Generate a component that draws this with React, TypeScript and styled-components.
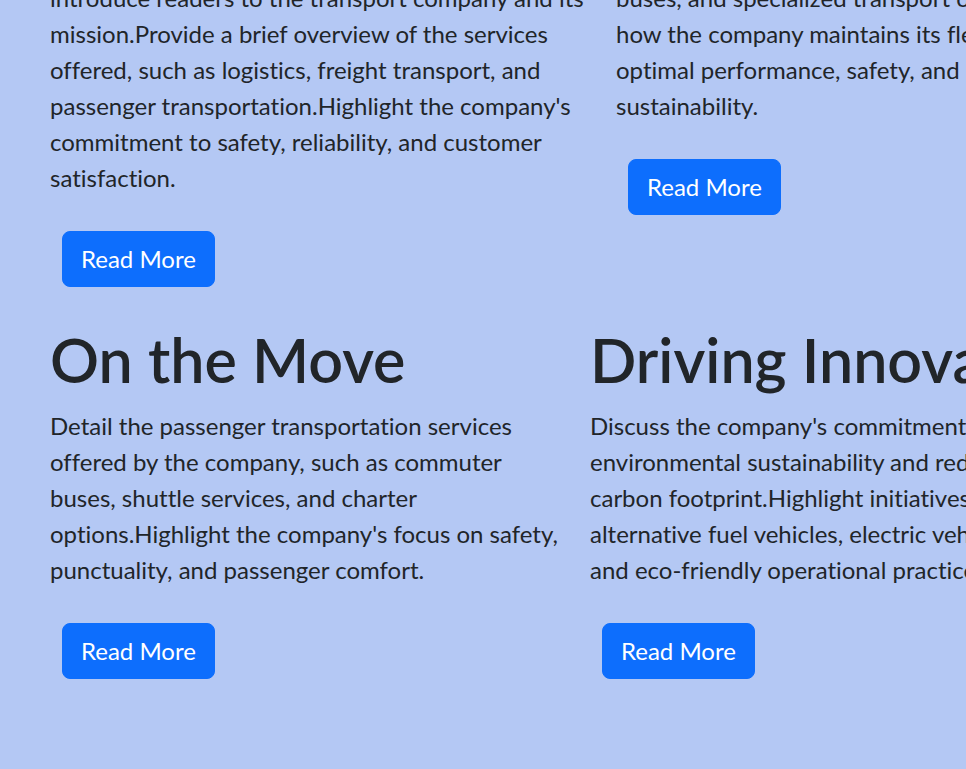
import React from "react";
import styled, { createGlobalStyle } from "styled-components";

const Global = createGlobalStyle`
  html, body {
    margin: 0;
    padding: 0;
    background: #b4c8f4;
    overflow: hidden;
  }
  body {
    font-family: Lato, "Noto Sans", sans-serif;
    font-variant-ligatures: none;
    color: #212529;
  }
`;

const Page = styled.main`
  margin-top: -20px;
  padding-left: 50px;
  width: 1300px;
  display: flex;
  flex-direction: column;
  gap: 37px;
`;

const Row = styled.section<{ $left: number }>`
  display: grid;
  grid-template-columns: ${(p) => p.$left}px 1fr;
`;

const Card = styled.article`
  display: flex;
  flex-direction: column;
  align-items: flex-start;
  min-width: 0;
`;

const Title = styled.h1`
  margin: 0 0 12px;
  font-size: 61px;
  font-weight: 600;
  line-height: 72px;
  white-space: nowrap;
`;

const Text = styled.p`
  margin: 0 0 35px;
  font-size: 24px;
  line-height: 36px;
  white-space: nowrap;
`;

const Button = styled.button`
  margin-left: 12px;
  padding: 9px 18px;
  border: 1px solid #0d6efd;
  border-radius: 8px;
  background: #0d6efd;
  color: #ffffff;
  font-family: inherit;
  font-variant-ligatures: none;
  font-size: 24px;
  line-height: 36px;
  cursor: pointer;
`;

type Item = { title?: string; lines: string[] };

const Lines = ({ lines }: { lines: string[] }) => (
  <Text>
    {lines.map((l, i) => (
      <React.Fragment key={i}>
        {l}
        {i < lines.length - 1 && <br />}
      </React.Fragment>
    ))}
  </Text>
);

const CardView = ({ item }: { item: Item }) => (
  <Card>
    {item.title && <Title>{item.title}</Title>}
    <Lines lines={item.lines} />
    <Button type="button">Read More</Button>
  </Card>
);

const top: Item[] = [
  {
    lines: [
      "introduce readers to the transport company and its",
      "mission.Provide a brief overview of the services",
      "offered, such as logistics, freight transport, and",
      "passenger transportation.Highlight the company's",
      "commitment to safety, reliability, and customer",
      "satisfaction.",
    ],
  },
  {
    lines: [
      "buses, and specialized transport options.Explain",
      "how the company maintains its fleet to ensure",
      "optimal performance, safety, and",
      "sustainability.",
    ],
  },
];

const bottom: Item[] = [
  {
    title: "On the Move",
    lines: [
      "Detail the passenger transportation services",
      "offered by the company, such as commuter",
      "buses, shuttle services, and charter",
      "options.Highlight the company's focus on safety,",
      "punctuality, and passenger comfort.",
    ],
  },
  {
    title: "Driving Innovation",
    lines: [
      "Discuss the company's commitment to",
      "environmental sustainability and reducing its",
      "carbon footprint.Highlight initiatives such as",
      "alternative fuel vehicles, electric vehicles,",
      "and eco-friendly operational practices.",
    ],
  },
];

export default function App() {
  return (
    <>
      <Global />
      <Page>
        <Row $left={566}>
          {top.map((it, i) => (
            <CardView key={i} item={it} />
          ))}
        </Row>
        <Row $left={540}>
          {bottom.map((it, i) => (
            <CardView key={i} item={it} />
          ))}
        </Row>
      </Page>
    </>
  );
}
